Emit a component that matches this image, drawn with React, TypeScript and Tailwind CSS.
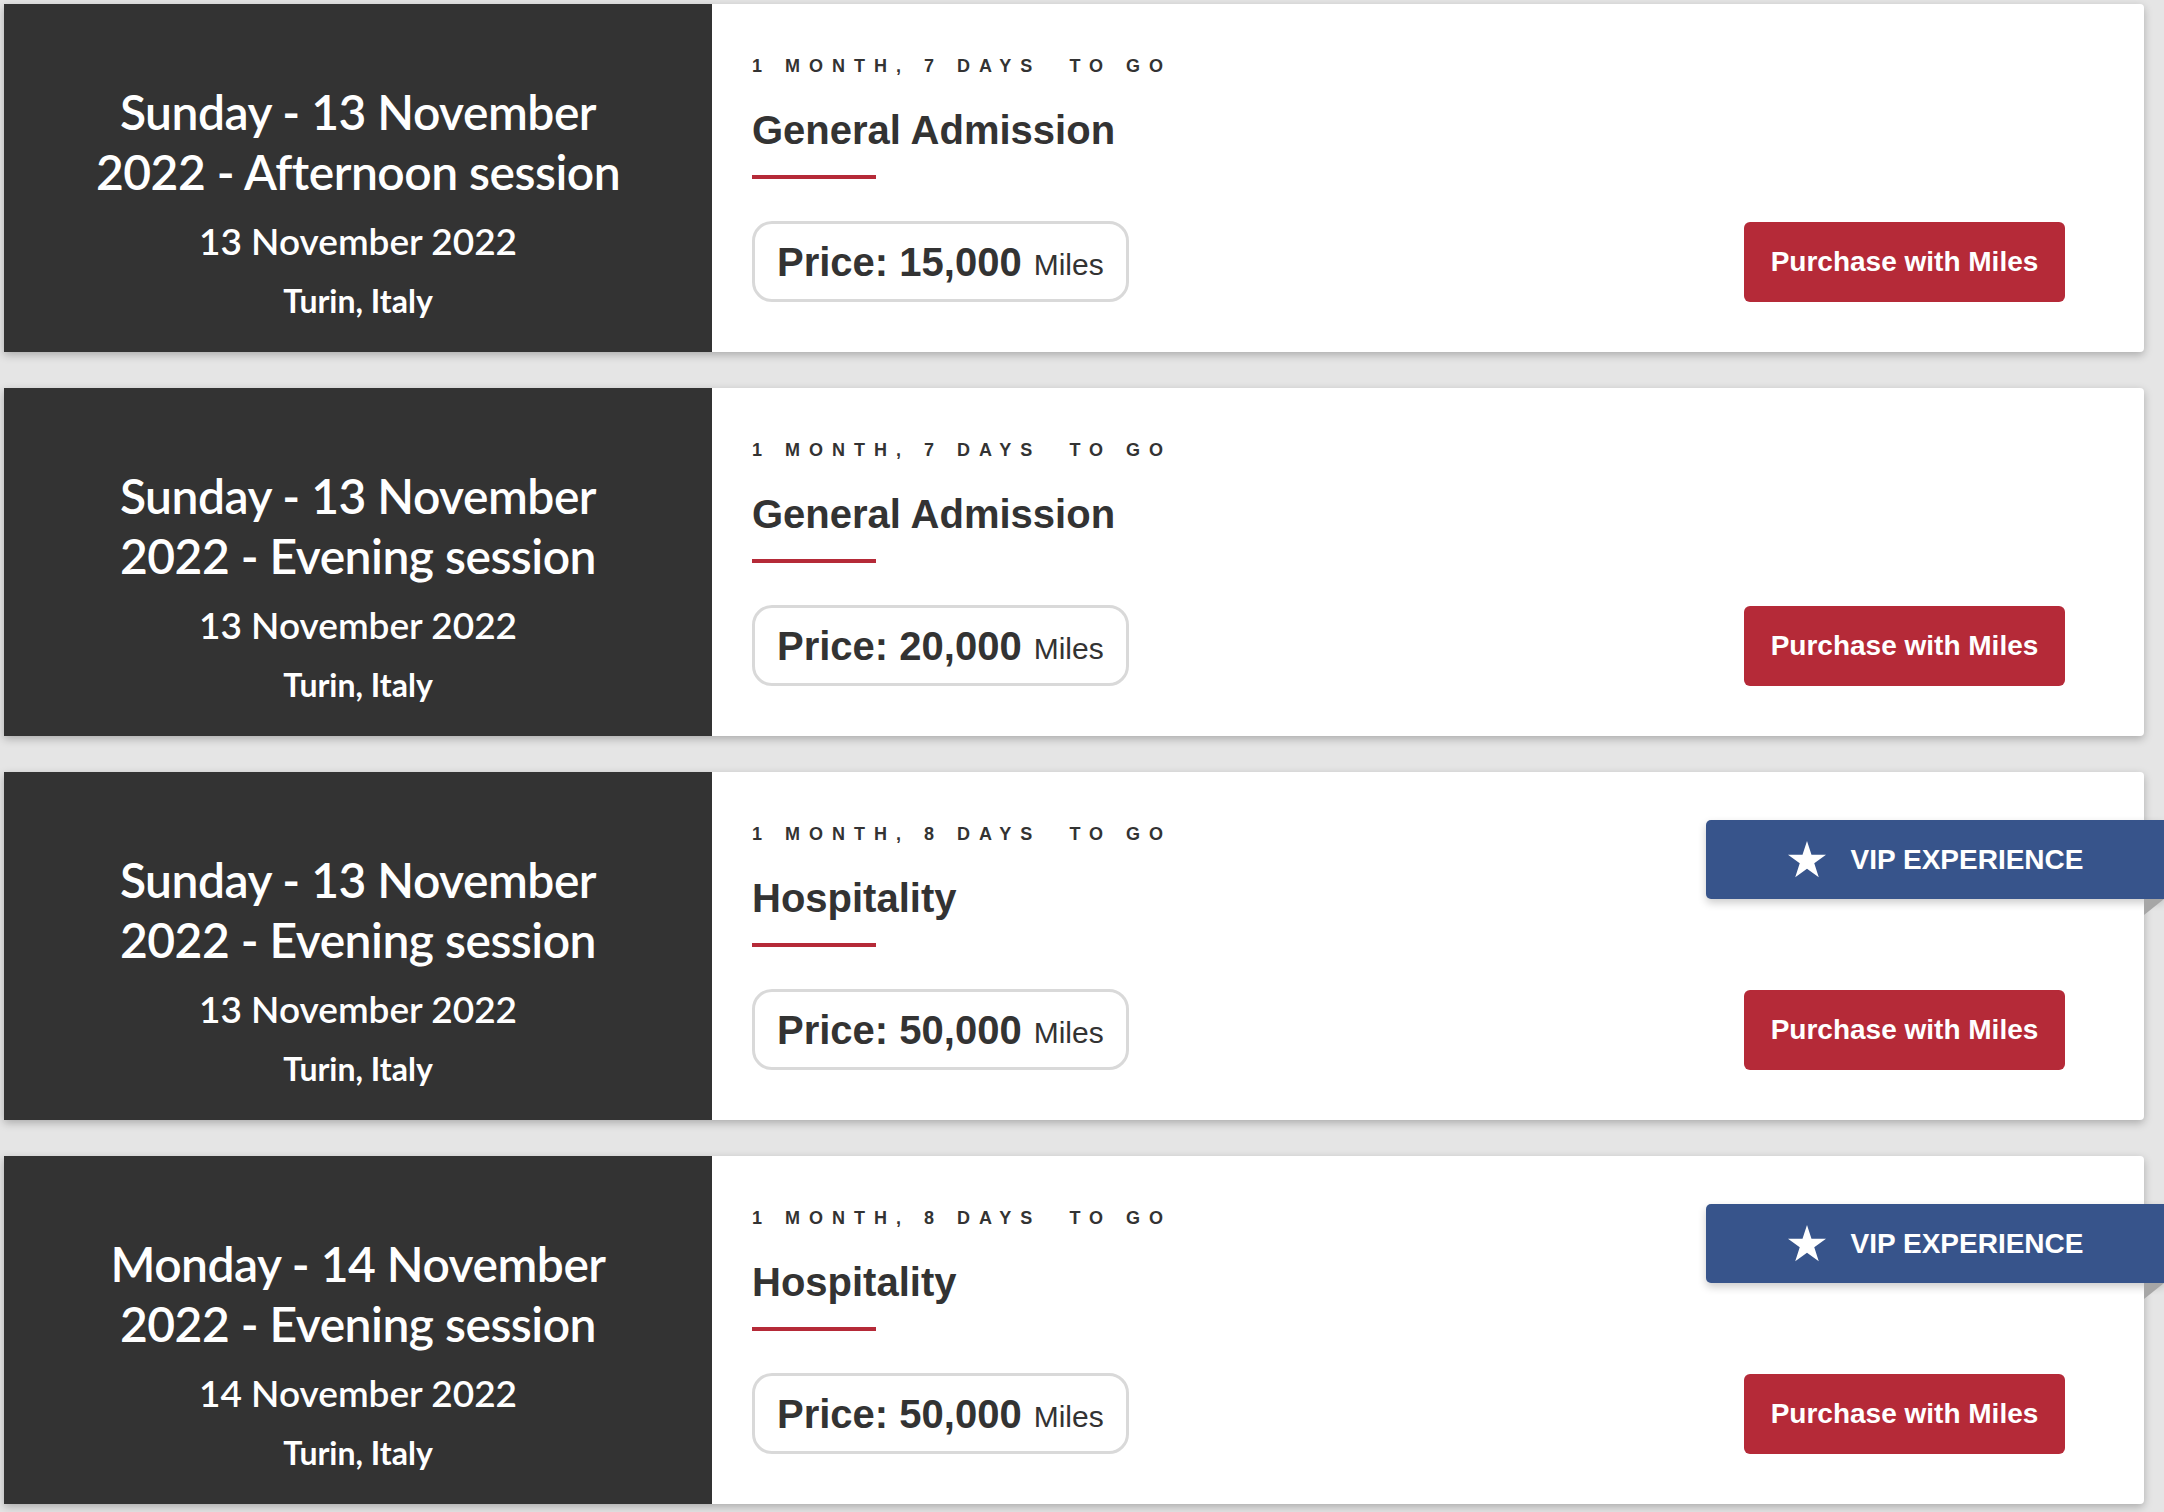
import React from "react"

type Session = {
  id: number
  title: string
  date: string
  place: string
  timer: string
  ticket: string
  price: string
  vip: boolean
}

const sessions: Session[] = [
  { id: 1, title: "Sunday - 13 November 2022 - Afternoon session", date: "13 November 2022", place: "Turin, Italy", timer: "1 MONTH, 7 DAYS", ticket: "General Admission", price: "15,000", vip: false },
  { id: 2, title: "Sunday - 13 November 2022 - Evening session", date: "13 November 2022", place: "Turin, Italy", timer: "1 MONTH, 7 DAYS", ticket: "General Admission", price: "20,000", vip: false },
  { id: 3, title: "Sunday - 13 November 2022 - Evening session", date: "13 November 2022", place: "Turin, Italy", timer: "1 MONTH, 8 DAYS", ticket: "Hospitality", price: "50,000", vip: true },
  { id: 4, title: "Monday - 14 November 2022 - Evening session", date: "14 November 2022", place: "Turin, Italy", timer: "1 MONTH, 8 DAYS", ticket: "Hospitality", price: "50,000", vip: true },
]

function Star() {
  return (
    <svg width="40" height="38" viewBox="0 0 100 95" fill="white">
      <polygon points="50,0 61.23,34.55 97.55,34.55 68.17,55.9 79.39,90.45 50,69.1 20.61,90.45 31.83,55.9 2.45,34.55 38.77,34.55" />
    </svg>
  )
}

function SessionCard({ s }: { s: Session }) {
  return (
    <div className="relative flex h-[348px] w-[2140px] rounded-r-[4px] bg-white shadow-[0_3px_8px_rgba(0,0,0,0.25)]">
      {/* date panel */}
      <div className="flex w-[708px] shrink-0 flex-col items-center justify-center bg-[#333333] pt-[44px] text-center text-white [font-family:Lato,'Open_Sans',sans-serif]">
        <h2 className="max-w-[560px] text-[48px] font-semibold leading-[60px] tracking-[-0.5px]">{s.title}</h2>
        <p className="mt-[17px] text-[37px] font-semibold leading-[43px]">{s.date}</p>
        <p className="mt-[21px] text-[32px] font-bold leading-[36px]">{s.place}</p>
      </div>

      {/* ticket panel */}
      <div className="flex flex-1 flex-col pl-[40px] pr-[79px] pt-[53px] text-[#333333] [font-family:'Liberation_Sans',Arial,sans-serif]">
        <div className="text-[18px] font-bold uppercase leading-[18px] tracking-[9px]">
          <span>{s.timer}</span> <span className="ml-[14px]">TO GO</span>
        </div>
        <h3 className="mt-[35px] text-[40px] font-bold leading-[40px]">{s.ticket}</h3>
        <div className="mt-[25px] h-[4px] w-[124px] bg-[#b52a38]" />
        <div className="mt-[42px] flex items-center justify-between">
          <div className="flex h-[81px] items-center rounded-[20px] border-[3px] border-[#d9d9d9] px-[22px]">
            <span className="text-[40px] font-bold">Price: {s.price}</span>
            <span className="ml-[12px] mt-[6px] text-[30px]">Miles</span>
          </div>
          <button className="h-[80px] w-[321px] rounded-[6px] bg-[#b52a38] text-[28px] font-bold text-white">
            Purchase with Miles
          </button>
        </div>
      </div>

      {s.vip && (
        <>
          <div className="absolute right-[-20px] top-[48px] flex h-[79px] w-[458px] items-center justify-center gap-[24px] rounded-l-[5px] bg-[#37548b] text-[28px] font-bold text-white shadow-[0_4px_8px_rgba(0,0,0,0.2)] [font-family:'Liberation_Sans',Arial,sans-serif]">
            <Star />
            <span>VIP EXPERIENCE</span>
          </div>
          <div className="absolute right-[-20px] top-[127px] h-[16px] w-[20px] bg-[#a6a6a6] [clip-path:polygon(0_0,100%_0,0_100%)]" />
        </>
      )}
    </div>
  )
}

export default function App() {
  return (
    <div className="min-h-screen overflow-x-hidden bg-[#e5e5e5] pb-[8px] pl-[4px] pr-[20px] pt-[4px]">
      <div className="flex flex-col gap-[36px]">
        {sessions.map((s) => (
          <SessionCard key={s.id} s={s} />
        ))}
      </div>
    </div>
  )
}
